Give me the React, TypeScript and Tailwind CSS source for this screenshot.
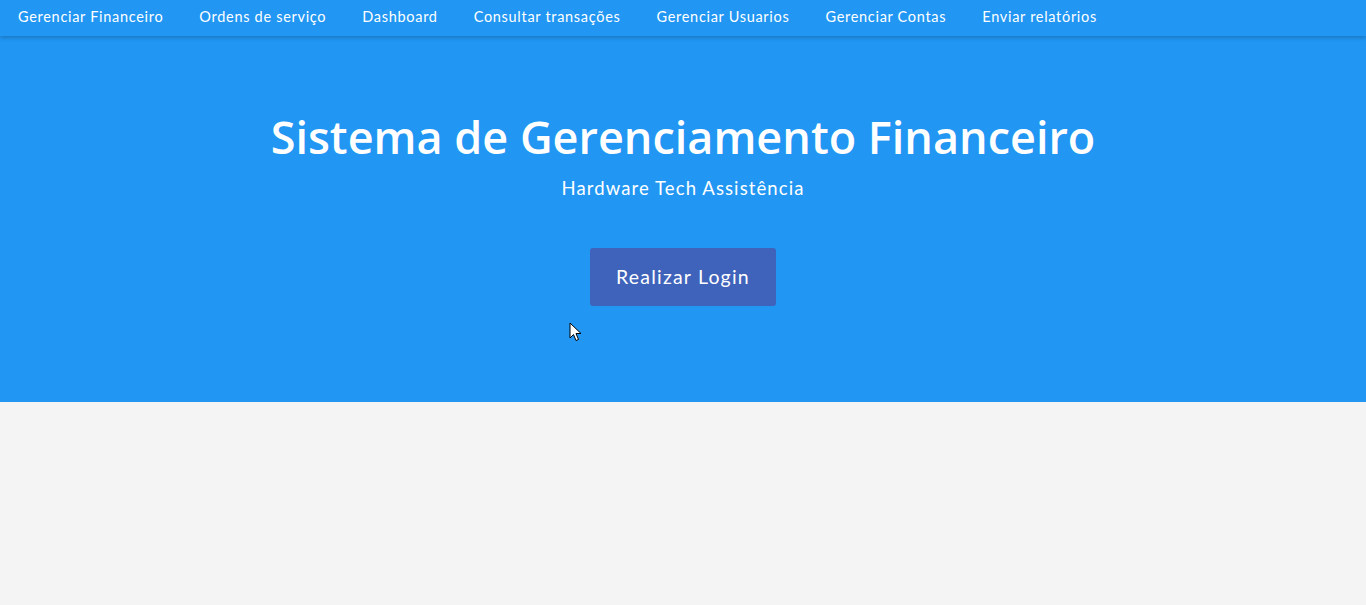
const navItems = [
  "Gerenciar Financeiro",
  "Ordens de serviço",
  "Dashboard",
  "Consultar transações",
  "Gerenciar Usuarios",
  "Gerenciar Contas",
  "Enviar relatórios",
];

export default function App() {
  return (
    <div className="min-h-[605px] bg-[#f4f4f4] font-['Lato',sans-serif]">
      <nav className="relative z-10 flex h-9 items-center bg-[#2196f3] pb-[3px] shadow-[0_2px_4px_rgba(0,0,0,0.2)]">
        {navItems.map((item) => (
          <a
            key={item}
            href="#"
            className="px-[18px] text-[14.5px] tracking-[0.7px] text-white"
          >
            {item}
          </a>
        ))}
      </nav>

      <header className="relative flex h-[366px] flex-col items-center bg-[#2196f3] pt-[72px] text-white">
        <h1 className="font-['Open_Sans',sans-serif] text-[45px] font-semibold leading-[58px]">
          Sistema de Gerenciamento Financeiro
        </h1>
        <p className="mt-[9px] text-[18.5px] leading-[26px] tracking-[1.1px]">
          Hardware Tech Assistência
        </p>
        <button className="mt-[47px] h-[58px] w-[186px] rounded-[3px] bg-[#3f63ba] text-[19.5px] tracking-[1.2px] text-white">
          Realizar Login
        </button>

        {/* mouse pointer captured in the shot */}
        <svg
          className="absolute left-[569px] top-[286px]"
          width="13"
          height="20"
          viewBox="0 0 13 20"
        >
          <path
            d="M1 1 L1 16 L4.5 12.5 L7 18.5 L9.5 17.5 L7 11.5 L12 11.5 Z"
            fill="white"
            stroke="black"
            strokeWidth="1"
            strokeLinejoin="round"
          />
        </svg>
      </header>
    </div>
  );
}
